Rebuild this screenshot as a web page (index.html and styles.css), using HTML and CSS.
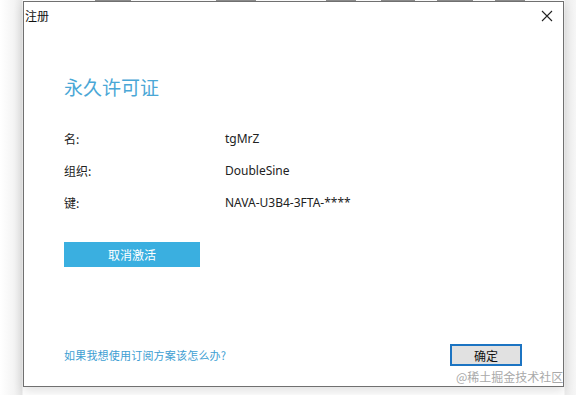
FILE: index.html
```html
<!DOCTYPE html>
<html lang="zh-CN">
<head>
    <meta charset="UTF-8">
    <title>注册</title>
    <link rel="stylesheet" href="styles.css">
</head>
<body>
    <div class="behind">
        <span class="frag" style="width: 36px; margin-left: 95px;"></span>
        <span class="frag" style="width: 40px; margin-left: 85px;"></span>
        <span class="frag" style="width: 30px; margin-left: 70px;"></span>
        <span class="frag" style="width: 34px; margin-left: 25px;"></span>
        <span class="frag" style="width: 36px; margin-left: 22px;"></span>
        <span class="frag" style="width: 30px; margin-left: 22px;"></span>
    </div>
    <div class="dialog">
        <div class="titlebar">
            <span class="title">注册</span>
            <svg class="close" width="12" height="12" viewBox="0 0 12 12">
                <path d="M1 1 L11 11 M11 1 L1 11" stroke="#222" stroke-width="1.1" fill="none"/>
            </svg>
        </div>
        <div class="content">
            <h1 class="heading">永久许可证</h1>
            <div class="info">
                <div class="row"><span class="label">名:</span><span class="value">tgMrZ</span></div>
                <div class="row"><span class="label">组织:</span><span class="value">DoubleSine</span></div>
                <div class="row"><span class="label">键:</span><span class="value">NAVA-U3B4-3FTA-****</span></div>
            </div>
            <button class="deactivate">取消激活</button>
            <div class="footer">
                <a class="link" href="#">如果我想使用订阅方案该怎么办?</a>
                <button class="ok">确定</button>
            </div>
        </div>
    </div>
    <div class="watermark">@稀土掘金技术社区</div>
</body>
</html>
```

FILE: styles.css
```css
body {
    margin: 0;
    width: 576px;
    height: 395px;
    overflow: hidden;
    position: relative;
    background: linear-gradient(to right, #ffffff 0px, #f4f4f4 14px, #e6e6e6 22px, #ffffff 23px, #ffffff 564px, #ececec 565px, #f6f6f6 576px);
    font-family: "Noto Sans", "Noto Sans CJK SC", sans-serif;
    color: #222;
}
.behind {
    display: flex;
    height: 1px;
}
.frag {
    display: block;
    height: 1px;
    background-color: #8a8a8a;
}
.dialog {
    margin-left: 23px;
    width: 539px;
    height: 384px;
    background-color: #fff;
    border: 1px solid #707070;
    box-shadow: 0 4px 10px rgba(0, 0, 0, 0.12);
    display: flex;
    flex-direction: column;
}
.titlebar {
    display: flex;
    justify-content: space-between;
    align-items: center;
    height: 26px;
    padding: 0 10px 0 1px;
}
.title {
    font-size: 12px;
    font-family: "Noto Sans CJK SC", sans-serif;
    color: #111;
}
.close {
    margin-top: 1px;
}
.content {
    flex: 1;
    display: flex;
    flex-direction: column;
    padding: 0 41px 0 40px;
}
.heading {
    margin: 45px 0 0 0;
    font-size: 19px;
    font-weight: normal;
    font-family: "Noto Sans CJK SC", sans-serif;
    color: #4aa7d6;
    line-height: 28px;
}
.info {
    margin-top: 29px;
    display: flex;
    flex-direction: column;
    gap: 14px;
}
.row {
    display: flex;
    font-size: 12px;
    line-height: 18px;
}
.label {
    width: 161px;
    font-family: "Noto Sans CJK SC", sans-serif;
}
.deactivate {
    margin-top: 30px;
    width: 136px;
    height: 25px;
    border: none;
    background-color: #3aafe0;
    color: #fff;
    font-size: 12px;
    font-family: "Noto Sans CJK SC", sans-serif;
    padding: 0;
}
.footer {
    margin-top: auto;
    margin-bottom: 20px;
    display: flex;
    justify-content: space-between;
    align-items: center;
}
.link {
    color: #3d9ed2;
    font-size: 11px;
    letter-spacing: 0.2px;
    text-decoration: none;
    font-family: "Noto Sans CJK SC", sans-serif;
}
.ok {
    width: 72px;
    height: 22px;
    padding: 0;
    border: 2px solid #1c74c2;
    background-color: #e1e1e1;
    color: #111;
    font-size: 12px;
    font-family: "Noto Sans CJK SC", sans-serif;
}
.watermark {
    position: absolute;
    left: 456px;
    top: 368px;
    font-size: 12px;
    color: #a9a9a9;
    font-family: "Noto Sans CJK SC", sans-serif;
}
```
